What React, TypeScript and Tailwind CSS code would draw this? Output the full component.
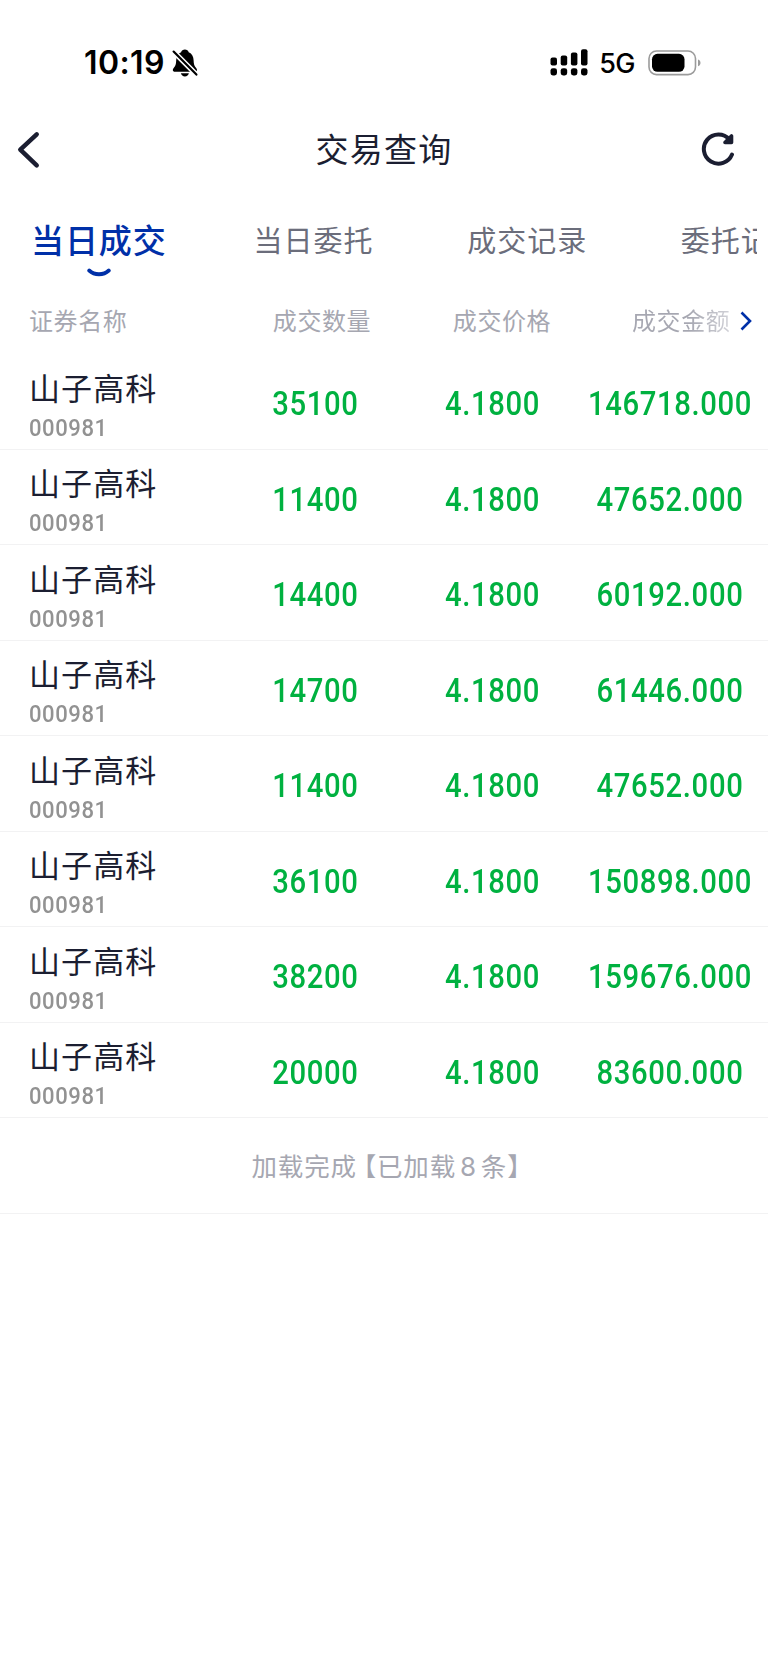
interface Deal {
  name: string;
  code: string;
  volume: string;
  price: string;
  amount: string;
}

const TABS = ['当日委托', '成交记录', '委托记录'];

const DEALS: Deal[] = [
  { name: '山子高科', code: '000981', volume: '35100', price: '4.1800', amount: '146718.000' },
  { name: '山子高科', code: '000981', volume: '11400', price: '4.1800', amount: '47652.000' },
  { name: '山子高科', code: '000981', volume: '14400', price: '4.1800', amount: '60192.000' },
  { name: '山子高科', code: '000981', volume: '14700', price: '4.1800', amount: '61446.000' },
  { name: '山子高科', code: '000981', volume: '11400', price: '4.1800', amount: '47652.000' },
  { name: '山子高科', code: '000981', volume: '36100', price: '4.1800', amount: '150898.000' },
  { name: '山子高科', code: '000981', volume: '38200', price: '4.1800', amount: '159676.000' },
  { name: '山子高科', code: '000981', volume: '20000', price: '4.1800', amount: '83600.000' },
];

function MutedBell() {
  return (
    <svg className="ml-[7px] h-[28px] w-[26px]" viewBox="0 0 26 28" fill="none">
      <path
        d="M12.9 0.6c-1.9 0-3.3 1.1-3.8 2.6C5.700 4.500 4.300 7.600 4.200 11.200c-.1 4.100-.8 5.900-2.500 7.700-.6.700-.9 1.300-.9 2 0 1.100.9 1.800 2.200 1.800h19.800c1.300 0 2.200-.7 2.200-1.800 0-.7-.3-1.300-.9-2-1.700-1.800-2.400-3.600-2.500-7.700-.1-3.600-1.500-6.700-4.900-8C16.200 1.700 14.800.6 12.900.6z"
        fill="#000"
      />
      <path d="M8.900 24.300h8c-.4 1.900-2 3.200-4 3.200s-3.600-1.300-4-3.200z" fill="#000" />
      <path d="M0.500 1.500 25 26.200" stroke="#fff" strokeWidth="5.200" />
      <path d="M1.600 2.600 24.400 25.600" stroke="#000" strokeWidth="2.200" strokeLinecap="round" />
    </svg>
  );
}

function Signal() {
  return (
    <svg className="h-[27px] w-[38px]" viewBox="0 0 38 27" fill="#000">
      <rect x="0.500" y="8.500" width="6.500" height="8" rx="2" />
      <rect x="10.700" y="6.500" width="6.500" height="10" rx="2" />
      <rect x="20.900" y="3.500" width="6.500" height="13" rx="2" />
      <rect x="31" y="0.300" width="6.500" height="16.200" rx="2" />
      <rect x="0.500" y="19.200" width="6.500" height="7.300" rx="2.400" />
      <rect x="10.700" y="19.200" width="6.500" height="7.300" rx="2.400" />
      <rect x="20.900" y="19.200" width="6.500" height="7.300" rx="2.400" />
      <rect x="31" y="19.200" width="6.500" height="7.300" rx="2.400" />
    </svg>
  );
}

function Battery() {
  return (
    <svg className="h-[26px] w-[54px]" viewBox="0 0 54 26" fill="none">
      <rect x="1" y="1" width="46.500" height="23.600" rx="7.500" stroke="#9b9b9b" strokeWidth="1.600" />
      <rect x="4" y="3.800" width="32.500" height="18" rx="5.500" fill="#000" />
      <path d="M50 9.500c1.600.6 2.500 1.900 2.500 3.400s-.9 2.800-2.500 3.400z" fill="#9b9b9b" />
    </svg>
  );
}

function StatusBar() {
  return (
    <div className="flex h-[108px] items-center justify-between pt-[17px] pr-[66px] pl-[84px] text-black">
      <div className="flex items-center">
        <span className="pt-px text-[32px] leading-none font-semibold tracking-[0.400px]">10:19</span>
        <MutedBell />
      </div>
      <div className="flex items-center">
        <Signal />
        <span className="mr-[13px] ml-[11px] pt-[2px] text-[27px] leading-none font-[450] tracking-[-0.500px]">5G</span>
        <Battery />
      </div>
    </div>
  );
}

function NavBar() {
  return (
    <div className="grid h-[84px] grid-cols-[1fr_auto_1fr] items-center pr-[33px] pl-[16px] text-[#1b1e31]">
      <svg className="h-[38px] w-[24px]" viewBox="0 0 24 38" fill="none">
        <path d="M20.700 3.300 4.300 18.600 20.700 34.400" stroke="currentColor" strokeWidth="4.500" strokeLinecap="round" strokeLinejoin="round" />
      </svg>
      <h1 className="pl-[17px] text-[33px] leading-none tracking-[1.200px]">交易查询</h1>
      <svg className="-mt-[2px] h-[34px] w-[34px] justify-self-end" viewBox="0 0 34 34" fill="none">
        <path d="M31 22.500A14.600 14.600 0 1 1 28.500 7.500" stroke="currentColor" strokeWidth="4" strokeLinecap="round" />
        <path d="M30.500 4v6.500h-6.500z" fill="currentColor" stroke="currentColor" strokeWidth="3.600" strokeLinejoin="round" />
      </svg>
    </div>
  );
}

function Tabs() {
  return (
    <div className="mr-[11px] ml-[31px] flex h-[96px] overflow-hidden whitespace-nowrap">
      <div className="flex shrink-0 flex-col items-center pt-[33px] text-[#0030a8]">
        <span className="text-[33px] leading-none font-medium tracking-[0.900px]">当日成交</span>
        <svg className="mt-[10px] h-[10px] w-[24px]" viewBox="0 0 24 10" fill="none">
          <path d="M2.200 2.500c5.300 5 14.300 5 19.600 0" stroke="currentColor" strokeWidth="3.800" strokeLinecap="round" />
        </svg>
      </div>
      <div className="ml-[87px] flex shrink-0 gap-[93.5px] pt-[35px] text-[#6b6d7b]">
        {TABS.map((tab) => (
          <span key={tab} className="block text-[29px] leading-none tracking-[1px]">
            {tab}
          </span>
        ))}
      </div>
    </div>
  );
}

function TableHead() {
  return (
    <div className="grid h-[66px] grid-cols-[232px_180px_180px_148px_28px] items-center text-[24px] leading-none tracking-[0.600px] text-[#a6a7b1]">
      <span className="pt-px pl-[29px]">证券名称</span>
      <span className="pt-px text-center">成交数量</span>
      <span className="pt-px text-center">成交价格</span>
      <span className="bg-linear-to-r from-[#a6a7b1] from-65% to-[#dcdce1] bg-clip-text pt-px pl-[40px] text-transparent">成交金额</span>
      <svg className="h-[20px] w-[12px]" viewBox="0 0 12 20" fill="none">
        <path d="M1.500 1.500 10 10 1.500 18.500" stroke="#0030a8" strokeWidth="2.600" />
      </svg>
    </div>
  );
}

function Figure({ value }: { value: string }) {
  return (
    <span className="flex scale-x-90 justify-center pt-[6px] font-['Roboto'] text-[32.5px] leading-none font-medium tracking-[0.700px] text-[#00b140]">
      {value}
    </span>
  );
}

function DealRow({ deal }: { deal: Deal }) {
  return (
    <div className="grid h-[95.5px] grid-cols-[227px_177px_177px_178px] items-center border-b border-[#f2f2f3]">
      <div className="pt-[10px] pl-[29px]">
        <div className="text-[31px] leading-none tracking-[1.100px] text-[#1b1e31]">{deal.name}</div>
        <div className="mt-[12px] origin-left scale-x-90 font-['Roboto'] text-[24.5px] leading-none font-medium tracking-[0.650px] text-[#929292]">
          {deal.code}
        </div>
      </div>
      <Figure value={deal.volume} />
      <Figure value={deal.price} />
      <Figure value={deal.amount} />
    </div>
  );
}

export default function App() {
  return (
    <div className="h-[1670px] w-[768px] overflow-hidden bg-white font-['Inter','Noto_Sans_CJK_SC',sans-serif]">
      <StatusBar />
      <NavBar />
      <Tabs />
      <TableHead />
      {DEALS.map((deal, i) => (
        <DealRow key={i} deal={deal} />
      ))}
      <div className="flex h-[96px] items-center justify-center border-b border-[#f2f2f3] pt-[2px] pl-[17px] text-[25.5px] leading-none tracking-[0.800px] text-[#a6a7b1]">
        <span>加载完成</span>
        <span className="-ml-[6px]">【</span>
        <span>已加载</span>
        <span className="mx-[4px] text-[26px]">8</span>
        <span>条】</span>
      </div>
    </div>
  );
}
